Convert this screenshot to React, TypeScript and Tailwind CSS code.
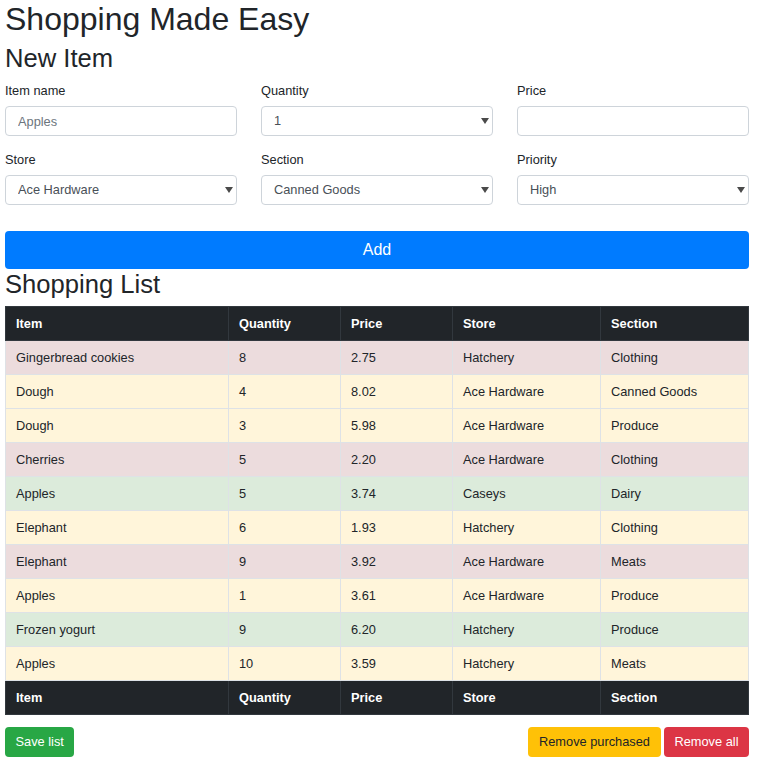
import { ChangeEvent, useState } from "react";

type Priority = "High" | "Medium" | "Low";

interface Item {
    name: string;
    quantity: number;
    price: string;
    store: string;
    section: string;
    priority: Priority;
}

const items: Item[] = [
    { name: "Gingerbread cookies", quantity: 8, price: "2.75", store: "Hatchery", section: "Clothing", priority: "High" },
    { name: "Dough", quantity: 4, price: "8.02", store: "Ace Hardware", section: "Canned Goods", priority: "Medium" },
    { name: "Dough", quantity: 3, price: "5.98", store: "Ace Hardware", section: "Produce", priority: "Medium" },
    { name: "Cherries", quantity: 5, price: "2.20", store: "Ace Hardware", section: "Clothing", priority: "High" },
    { name: "Apples", quantity: 5, price: "3.74", store: "Caseys", section: "Dairy", priority: "Low" },
    { name: "Elephant", quantity: 6, price: "1.93", store: "Hatchery", section: "Clothing", priority: "Medium" },
    { name: "Elephant", quantity: 9, price: "3.92", store: "Ace Hardware", section: "Meats", priority: "High" },
    { name: "Apples", quantity: 1, price: "3.61", store: "Ace Hardware", section: "Produce", priority: "Medium" },
    { name: "Frozen yogurt", quantity: 9, price: "6.20", store: "Hatchery", section: "Produce", priority: "Low" },
    { name: "Apples", quantity: 10, price: "3.59", store: "Hatchery", section: "Meats", priority: "Medium" },
];

const rowColor: Record<Priority, string> = {
    High: "bg-[#ecdcdd]",
    Medium: "bg-[#fff5da]",
    Low: "bg-[#dcebdb]",
};

const inputClass =
    "w-full h-[30px] px-[12px] border border-[#ced4da] rounded-[4px] bg-white text-[12.8px] text-[#495057] outline-none";

const Caret = () => (
    <svg
        width="8"
        height="6"
        viewBox="0 0 8 6"
        className="absolute right-[4px] top-[12px] pointer-events-none"
    >
        <path d="M0 0 L8 0 L4 6 Z" fill="#4a4a4a" />
    </svg>
);

const Field = ({ label, children }: { label: string; children: React.ReactNode }) => (
    <div className="flex flex-col">
        <label className="h-[19px] leading-[19px] mb-[6px] text-[12.8px] text-[#212529]">
            {label}
        </label>
        {children}
    </div>
);

const Select = ({ value, options }: { value: string; options: string[] }) => {
    const [v, setV] = useState(value);
    return (
        <div className="relative">
            <select
                className={`${inputClass} appearance-none`}
                value={v}
                onChange={(e: ChangeEvent<HTMLSelectElement>) => setV(e.target.value)}
            >
                {options.map((o) => (
                    <option key={o}>{o}</option>
                ))}
            </select>
            <Caret />
        </div>
    );
};

const Head = () => (
    <tr className="h-[34px] bg-[#212529] text-white font-bold">
        {["Item", "Quantity", "Price", "Store", "Section"].map((h) => (
            <th key={h} className="px-[10px] text-left border border-[#32383e]">
                {h}
            </th>
        ))}
    </tr>
);

export default function App() {
    return (
        <div className="pl-[5px] pr-[8px] pb-[10px] font-['Liberation_Sans',Arial,sans-serif] text-[#212529] bg-white">
            <h1 className="text-[32px] leading-[38px]">Shopping Made Easy</h1>
            <h2 className="text-[25.6px] leading-[31px] mt-[5px] mb-[7px]">New Item</h2>

            <div className="grid grid-cols-3 gap-x-[24px] gap-y-[14px]">
                <Field label="Item name">
                    <input className={`${inputClass} placeholder:text-[#6c757d]`} placeholder="Apples" />
                </Field>
                <Field label="Quantity">
                    <Select value="1" options={["1", "2", "3", "4", "5", "6", "7", "8", "9", "10"]} />
                </Field>
                <Field label="Price">
                    <input className={inputClass} />
                </Field>
                <Field label="Store">
                    <Select value="Ace Hardware" options={["Ace Hardware", "Caseys", "Hatchery"]} />
                </Field>
                <Field label="Section">
                    <Select
                        value="Canned Goods"
                        options={["Canned Goods", "Clothing", "Dairy", "Meats", "Produce"]}
                    />
                </Field>
                <Field label="Priority">
                    <Select value="High" options={["High", "Medium", "Low"]} />
                </Field>
            </div>

            <button className="mt-[26px] w-full h-[38px] rounded-[4px] bg-[#007bff] text-white text-[16px]">
                Add
            </button>

            <h2 className="text-[25.6px] leading-[31px] mb-[6px]">Shopping List</h2>

            <table className="w-full border-collapse text-[12.8px]">
                <colgroup>
                    <col className="w-[223px]" />
                    <col className="w-[112px]" />
                    <col className="w-[112px]" />
                    <col className="w-[148px]" />
                    <col />
                </colgroup>
                <thead>
                    <Head />
                </thead>
                <tbody>
                    {items.map((it, i) => (
                        <tr key={i} className={`h-[34px] ${rowColor[it.priority]}`}>
                            <td className="px-[10px] border border-[#dee2e6]">{it.name}</td>
                            <td className="px-[10px] border border-[#dee2e6]">{it.quantity}</td>
                            <td className="px-[10px] border border-[#dee2e6]">{it.price}</td>
                            <td className="px-[10px] border border-[#dee2e6]">{it.store}</td>
                            <td className="px-[10px] border border-[#dee2e6]">{it.section}</td>
                        </tr>
                    ))}
                </tbody>
                <tfoot>
                    <Head />
                </tfoot>
            </table>

            <div className="mt-[12px] flex justify-between text-[12.8px]">
                <button className="h-[30px] px-[10.5px] rounded-[4px] bg-[#28a745] text-white">
                    Save list
                </button>
                <div className="flex gap-[3px]">
                    <button className="h-[30px] px-[11px] rounded-[4px] bg-[#ffc107] text-[#212529]">
                        Remove purchased
                    </button>
                    <button className="h-[30px] px-[10.5px] rounded-[4px] bg-[#dc3545] text-white">
                        Remove all
                    </button>
                </div>
            </div>
        </div>
    );
}
